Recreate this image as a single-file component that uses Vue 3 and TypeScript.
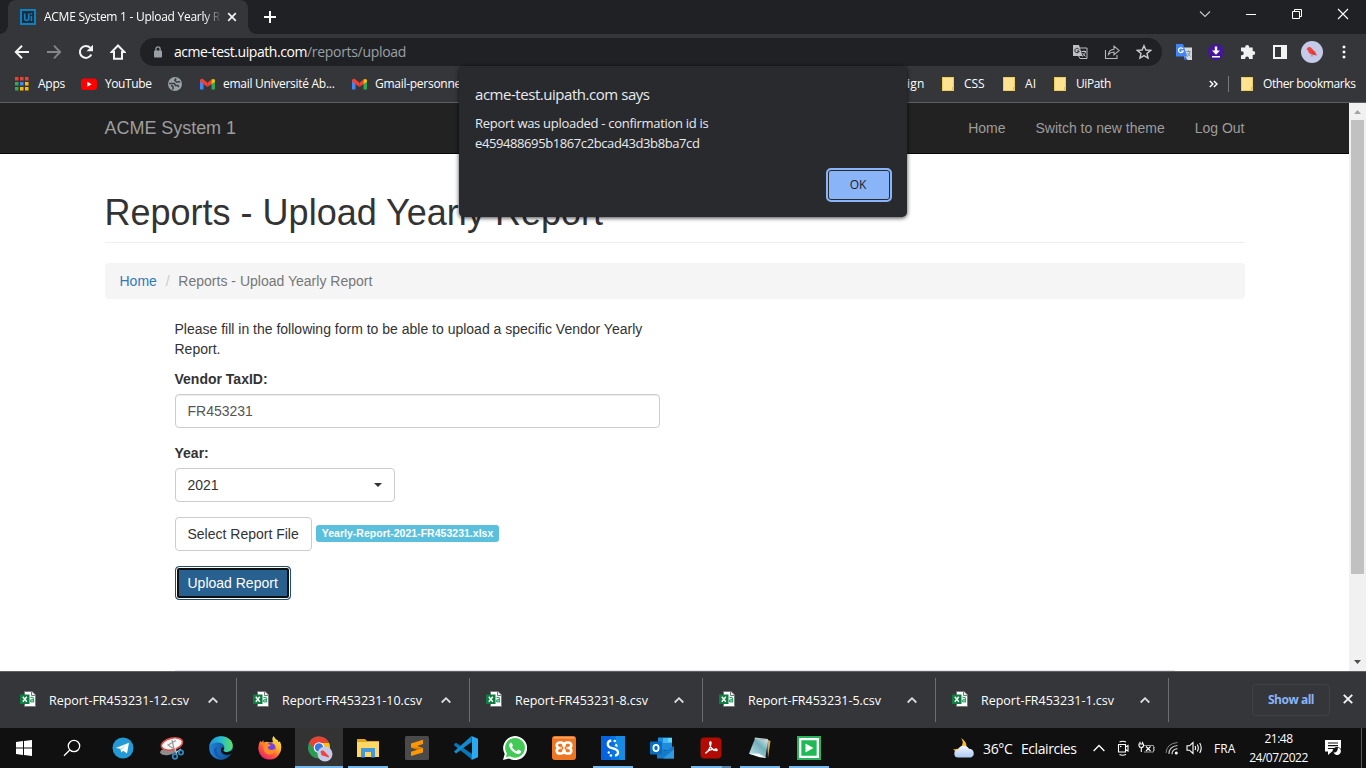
<script setup lang="ts">
import type { Directive } from 'vue'

// Spreads a label's letters so that it takes the given width in pixels.
const vFit: Directive<HTMLElement, number> = {
  mounted(el, { value }) {
    const count = (el.textContent ?? '').trim().length
    const natural = el.getBoundingClientRect().width
    if (count > 0) el.style.letterSpacing = `${((value - natural) / count).toFixed(4)}px`
  },
}

interface Download {
  name: string
  width: number
}

const downloads: Download[] = [
  { name: 'Report-FR453231-12.csv', width: 140 },
  { name: 'Report-FR453231-10.csv', width: 140 },
  { name: 'Report-FR453231-8.csv', width: 133 },
  { name: 'Report-FR453231-5.csv', width: 133 },
  { name: 'Report-FR453231-1.csv', width: 133 },
]
</script>

<template>
  <div class="screen">
    <header class="tabstrip">
      <div class="tab">
        <svg class="favicon" viewBox="0 0 16 16" width="16" height="16">
          <rect x="1" y="1" width="14" height="14" fill="#1c2c38" stroke="#0d80c4" stroke-width="2" />
          <path d="M4.7 4.5V9q0 2.5 2 2.5T8.8 9V4.5M11.4 7v5M11.4 4v1.6" fill="none" stroke="#0d80c4" stroke-width="1.6" />
        </svg>
        <div class="tab-title"><span v-fit="176">ACME System 1 - Upload Yearly R</span></div>
        <svg class="tab-close" viewBox="0 0 10 10" width="10" height="10"><path d="M1.2 1.2l7.6 7.6M8.8 1.2L1.2 8.8" stroke="#f1f3f4" stroke-width="1.7" /></svg>
      </div>
      <svg class="plus" viewBox="0 0 12 12" width="12" height="12"><path d="M6 0v12M0 6h12" stroke="#fff" stroke-width="2" /></svg>
      <div class="window-buttons">
        <svg viewBox="0 0 12 12" width="12" height="12"><path d="M1 3.5l5 5 5-5" fill="none" stroke="#c8c9ca" stroke-width="1.1" /></svg>
        <svg viewBox="0 0 12 12" width="12" height="12"><path d="M1 6.5h10" stroke="#fff" /></svg>
        <svg viewBox="0 0 12 12" width="12" height="12"><path d="M1.5 3.5h7v7h-7zM3.500 3.500v-2h7v7h-2" fill="none" stroke="#fff" /></svg>
        <svg viewBox="0 0 12 12" width="12" height="12"><path d="M1 1l10 10M11 1L1 11" stroke="#fff" stroke-width="1.1" /></svg>
      </div>
    </header>

    <div class="toolbar">
      <div class="nav-icons">
        <svg viewBox="0 0 16 16" width="16" height="16"><path d="M15 8H2M8 1.700L1.800 8 8 14.300" fill="none" stroke="#f1f3f4" stroke-width="2" /></svg>
        <svg viewBox="0 0 16 16" width="16" height="16"><path d="M1 8h13M8 1.700L14.200 8 8 14.300" fill="none" stroke="#85878a" stroke-width="1.800" /></svg>
        <svg viewBox="0 0 16 16" width="16" height="16"><path d="M13.300 10.500A6 6 0 1 1 12.300 3.800" fill="none" stroke="#f1f3f4" stroke-width="2" /><path d="M15 .8v6.500H8.500z" fill="#f1f3f4" /></svg>
        <svg viewBox="0 0 16 16" width="16" height="16"><path d="M8 1.500L1.600 8H4v6.800h8V8h2.400z" fill="none" stroke="#f1f3f4" stroke-width="2" /></svg>
      </div>
      <div class="omnibox">
        <svg class="lock" viewBox="0 0 8 12" width="8" height="12"><rect y="4.500" width="8" height="7" rx="1" fill="#9aa0a6" /><path d="M1.900 5V3a2.100 2.100 0 0 1 4.200 0v2" fill="none" stroke="#9aa0a6" stroke-width="1.300" /></svg>
        <span v-fit="133" class="host">acme-test.uipath.com</span><span v-fit="99" class="path">/reports/upload</span>
        <div class="omni-icons">
          <svg viewBox="0 0 16 16" width="16" height="16">
            <path d="M6 4h9v10.500H8L6 11z" fill="#202124" stroke="#bdc1c6" />
            <path d="M1 1h6l3.500 11H1z" fill="#bdc1c6" />
            <path d="M7 5.500A2.200 2.200 0 1 0 7.200 7H5" fill="none" stroke="#202124" />
            <path d="M9.500 7.500h4.500M12 6.500v1M13.500 8c-.8 2-1.800 3.300-3.500 4.500M10.500 9l3 3.500" stroke="#bdc1c6" fill="none" />
          </svg>
          <svg viewBox="0 0 16 16" width="16" height="16"><path d="M1.500 6v8.500h11.500v-3.500M4.500 10.500c.5-3.500 2.500-5 5.500-5.200V2.200L15.200 6.500 10 10.800V8c-2.600 0-4 .7-5.500 2.500z" fill="none" stroke="#b5b9be" stroke-width="1.100" /></svg>
          <svg viewBox="0 0 16 16" width="16" height="16"><path d="M8 1.700l1.900 4.300 4.700.4-3.600 3 1.100 4.600L8 11.600 3.900 14 5 9.400 1.400 6.400 6.100 6z" fill="none" stroke="#c8cbce" stroke-width="1.400" /></svg>
        </div>
      </div>
      <div class="extensions">
        <svg viewBox="0 0 16 16" width="16" height="16">
          <path d="M6 3.500h10V16H9z" fill="#d6d8da" /><path d="M9 12l2.500 4H8z" fill="#3367d6" />
          <path d="M0 0h7l4.300 12.500H0z" fill="#4285f4" />
          <path d="M7 5A2.400 2.400 0 1 0 7.200 7H5" stroke="#fff" fill="none" stroke-width="1.200" />
          <path d="M10.500 7.500h4M12.500 6.500v1M14 8c-.6 2-1.500 3.300-3 4.500M11.500 9l3 3.500" stroke="#78909c" fill="none" />
        </svg>
        <svg viewBox="0 0 16 16" width="16" height="16"><circle cx="8" cy="8" r="8" fill="#43169a" /><path d="M6.800 2.500h2.400v4H12L8 10.700 4 6.500h2.800zM4 12h8v1.400H4z" fill="#fff" /></svg>
        <svg viewBox="0 0 16 16" width="16" height="16"><path d="M1 3.500h4.200V3a2 2 0 0 1 4 0v.5h3.500V7h.5a2 2 0 0 1 0 4h-.5v4H9v-.6a1.900 1.900 0 0 0-3.800 0v.6H1v-3.800h.8a1.900 1.900 0 0 0 0-3.900H1z" fill="#eef0f2" /></svg>
        <svg viewBox="0 0 16 16" width="16" height="16"><path d="M1 1h14v14H1zM3 3v10h6V3z" fill="#f1f3f4" fill-rule="evenodd" /></svg>
      </div>
      <svg class="avatar" viewBox="0 0 22 22" width="22" height="22"><circle cx="11" cy="11" r="11" fill="#c5cae9" /><path d="M5.500 8.200L7.200 6.200q2.800-.5 4.100 1.800l3 3 1.700 3.700-4-1.300q-4.200 0-5-4z" fill="#f0443e" /><path d="M10 9l5 5-3-.4z" fill="#d0323f" /><path d="M11 13.500v2" stroke="#8d6e63" /></svg>
      <svg class="menu" viewBox="0 0 4 14" width="4" height="14"><path d="M.7.700h2.600v2.600H.7zM.7 5.700h2.600v2.600H.7zM.7 10.700h2.600v2.600H.7z" fill="#fff" /></svg>
    </div>

    <div class="bookmarks">
      <div class="bm-left">
        <svg viewBox="0 0 14 14" width="14" height="14">
          <path d="M0 0h3.500v3.500H0zM5 0h3.500v3.500H5zM10 0h3.500v3.500H10z" fill="#ea4335" />
          <path d="M0 5h3.500v3.500H0zM0 10h3.500v3.500H0z" fill="#34a853" /><path d="M5 5h3.500v3.500H5z" fill="#4285f4" />
          <path d="M10 5h3.500v3.500H10zM5 10h3.500v3.500H5zM10 10h3.500v3.500H10z" fill="#fbbc04" />
        </svg>
        <span><b v-fit="27">Apps</b></span>
        <svg viewBox="0 0 16 14" width="16" height="14"><rect y="1.500" width="16" height="11.500" rx="3" fill="red" /><path d="M6.300 4.800l4.400 2.500-4.400 2.500z" fill="#fff" /></svg>
        <span><b v-fit="46.500">YouTube</b></span>
        <svg viewBox="0 0 14 14" width="14" height="14"><circle cx="7" cy="7" r="7" fill="#9aa0a6" /><path d="M8.200 1.600L6.800 3.300 8.500 5l3.700-.3M1.200 6.500h5.300l1 2h2.300l1 1.500M3 8.300l2 1.200v3" fill="none" stroke="#3a3b3f" stroke-width="1.500" /></svg>
        <svg viewBox="0 0 15 12" width="15" height="12"><path d="M0 2v9.500h3.500V5z" fill="#4285f4" /><path d="M11.500 5v6.500H15V2z" fill="#34a853" /><path d="M0 2.200Q.5.200 2.500.8l5 3.900V9L0 3.500z" fill="#ea4335" /><path d="M7.500 4.700l4-3.100v4.500L7.500 9z" fill="#ea4335" /><path d="M11.500 1.600Q14 0 15 2.200v1.600l-3.500 2.500z" fill="#fbbc04" /></svg>
        <span><b v-fit="111.500">email Université Ab...</b></span>
        <svg viewBox="0 0 15 12" width="15" height="12"><path d="M0 2v9.500h3.500V5z" fill="#4285f4" /><path d="M11.500 5v6.500H15V2z" fill="#34a853" /><path d="M0 2.200Q.5.200 2.500.8l5 3.900V9L0 3.500z" fill="#ea4335" /><path d="M7.500 4.700l4-3.100v4.500L7.500 9z" fill="#ea4335" /><path d="M11.500 1.600Q14 0 15 2.200v1.600l-3.500 2.500z" fill="#fbbc04" /></svg>
        <span><b v-fit="86">Gmail-personne</b></span>
      </div>
      <div class="bm-right">
        <span><b v-fit="17.500">ign</b></span>
        <i class="folder"></i><span><b v-fit="20.500">CSS</b></span>
        <i class="folder"></i><span><b v-fit="11.500">AI</b></span>
        <i class="folder"></i><span><b v-fit="35">UiPath</b></span>
        <svg viewBox="0 0 9 8" width="9" height="8"><path d="M.8.900L3.900 4 .8 7.100M4.900.900L8 4 4.900 7.100" fill="none" stroke="#fff" stroke-width="1.400" /></svg>
        <i class="rule"></i>
        <i class="folder"></i><span><b v-fit="92.500">Other bookmarks</b></span>
      </div>
    </div>

    <main class="viewport">
      <div class="page">
        <nav class="navbar">
          <div class="container nav-row">
            <span v-fit="131.500" class="brand">ACME System 1</span>
            <div class="nav-links"><span>Home</span><span>Switch to new theme</span><span>Log Out</span></div>
          </div>
        </nav>
        <div class="container">
          <h1><span v-fit="498.500">Reports - Upload Yearly Report</span></h1>
          <div class="breadcrumb"><a>Home</a><span class="slash">/</span><span v-fit="194">Reports - Upload Yearly Report</span></div>
          <form class="form" @submit.prevent>
            <p>Please fill in the following form to be able to upload a specific Vendor Yearly<br />Report.</p>
            <div class="label">Vendor TaxID:</div>
            <div class="input">FR453231</div>
            <div class="label">Year:</div>
            <div class="select">2021<i class="caret"></i></div>
            <div class="file-row"><button type="button" class="btn">Select Report File</button><span class="badge"><span v-fit="171.500">Yearly-Report-2021-FR453231.xlsx</span></span></div>
            <button type="button" class="btn primary">Upload Report</button>
          </form>
          <div class="page-rule"></div>
        </div>
      </div>
      <div class="scrollbar">
        <svg viewBox="0 0 17 17" width="17" height="17"><path d="M5 11l3.500-4 3.500 4z" fill="#a3a3a3" /></svg>
        <div class="thumb"></div>
        <svg viewBox="0 0 17 17" width="17" height="17"><path d="M5 6l3.500 4L12 6z" fill="#505050" /></svg>
      </div>
    </main>

    <section class="downloads">
      <div v-for="d in downloads" :key="d.name" class="download">
        <svg viewBox="0 0 16 16" width="16" height="16">
          <path d="M4.500.5h7.500l3.500 3.500v11.500h-11z" fill="#fff" stroke="#777" />
          <path d="M11.500.5v4h4" fill="#eee" stroke="#777" />
          <rect y="3.500" width="9.500" height="9.500" fill="#107c41" />
          <path d="M2.800 5.800l4 5M6.800 5.800l-4 5" stroke="#fff" stroke-width="1.400" />
          <path d="M10.500 6.700q3-1 3 1.300v3.500M13.500 8.800q-3-.3-3 1.200t3 .5" fill="none" stroke="#33a66b" stroke-width="1.300" />
        </svg>
        <span class="file"><b v-fit="d.width">{{ d.name }}</b></span>
        <svg class="up" viewBox="0 0 12 8" width="12" height="8"><path d="M1.700 6.500L6 2.200l4.300 4.300" fill="none" stroke="#dcdee1" stroke-width="1.800" /></svg>
      </div>
      <div class="show-all"><span v-fit="46">Show all</span></div>
      <svg class="dl-close" viewBox="0 0 10 10" width="10" height="10"><path d="M.8.800l8.400 8.400M9.200.800L.8 9.200" stroke="#f1f3f4" stroke-width="1.900" /></svg>
    </section>

    <footer class="taskbar">
      <div class="system">
        <svg viewBox="0 0 16 16" width="16" height="16"><path d="M0 2l7-.9v6.400H0zM8 1l8-1v7.500H8zM0 8.500h7v6.400L0 14zM8 8.500h8V16l-8-1z" fill="#fff" /></svg>
        <svg viewBox="0 0 18 18" width="18" height="18"><circle cx="11" cy="7" r="5.700" fill="none" stroke="#fff" stroke-width="1.300" /><path d="M6.800 11L1 16.800" stroke="#fff" stroke-width="1.300" /></svg>
      </div>
      <div class="apps">
        <div class="app">
          <svg viewBox="0 0 24 24" width="24" height="24"><circle cx="12" cy="12" r="10.500" fill="#2399d5" /><path d="M4.800 12L18 6.800 16 17.500l-3.800-2.800-2 1.900-.8-3.900z" fill="#fff" /><path d="M9.400 12.700l6-4-4.300 5z" fill="#bddff2" /></svg>
        </div>
        <div class="app">
          <svg viewBox="0 0 24 24" width="24" height="24"><ellipse cx="8" cy="15.500" rx="8" ry="3.500" fill="#8d8d8d" transform="rotate(-8 8 15.500)" /><ellipse cx="12" cy="8" rx="10.800" ry="5.800" fill="#f8f8f8" stroke="#dd4f4b" stroke-width="1.600" transform="rotate(-14 12 8)" /><path d="M12 4l2 9M16 4.500L8 9l6 4" stroke="#999" stroke-width="1.200" fill="none" /><path d="M15 12l1.500 6M21 13l-5.500 4" stroke="#b8c6cf" stroke-width="1.300" /><circle cx="15" cy="20.500" r="2.300" fill="none" stroke="#2e8bc5" stroke-width="1.700" /><circle cx="21" cy="16.500" r="2.200" fill="none" stroke="#2e8bc5" stroke-width="1.700" /></svg>
        </div>
        <div class="app">
          <svg viewBox="0 0 24 24" width="24" height="24">
            <defs><linearGradient id="edge-top" x1="0" x2="1"><stop stop-color="#218fdc" /><stop offset=".5" stop-color="#26bccd" /><stop offset="1" stop-color="#5ee060" /></linearGradient><linearGradient id="edge-low" x1="0" x2="1"><stop stop-color="#2482d9" /><stop offset="1" stop-color="#0b4687" /></linearGradient></defs>
            <circle cx="12" cy="12" r="11.800" fill="url(#edge-low)" />
            <path d="M.2 11C1 4 6 .2 12 .2c7 0 12 4.500 11.800 9.500 0 5-4.800 7-8.300 6-2-.8-1.400-1.700-.5-2.800 1-2-.2-5.500-4-6.200C6.500 6 1.500 8 .2 11z" fill="url(#edge-top)" />
            <path d="M15.200 13q-2 2.300 1 3 3.500.800 6.800-1.500l1 .5-1 2.500q-4 2.300-7.500 1-4-1.500-3.500-5 .3-1.700 1.700-2.500 1.700.4 1.500 2z" fill="#111" /><path d="M8 11c-1.500 5 1.500 10.500 7 12-5 1-10-4-10-8.500 0-2 1-3 3-3.500z" fill="#125aaf" />
          </svg>
        </div>
        <div class="app">
          <svg viewBox="0 0 24 24" width="24" height="24"><defs><linearGradient id="fox" x1=".9" y1="0" x2=".2" y2="1"><stop stop-color="#fff44f" /><stop offset=".4" stop-color="#ffb02e" /><stop offset=".65" stop-color="#ff5b38" /><stop offset="1" stop-color="#e91b76" /></linearGradient></defs><path d="M2.200 5l1.500 1.300L5.500 4v2.500l3-.8Q13 7 15 6q-1.500-3.500.5-6 1.500 3 4.500 4.500l.2 1.500 1.800-.5q3 7-.8 12.800A11.300 11.300 0 0 1 .7 15Q-.5 9.500 2.200 5z" fill="url(#fox)" /><circle cx="12.300" cy="12" r="5.300" fill="#7542e5" /><path d="M5.500 8q3.500-1.500 5.500.2l2 1.300-3 1.300q-.5 2.500 2.500 3 3 .5 5-1.500-.5 6-6 6.300-7-.3-6-10.600z" fill="#ff8c27" /></svg>
        </div>
        <div class="app active">
          <svg viewBox="0 0 26 26" width="26" height="26"><circle cx="12" cy="11.500" r="11" fill="#2a9c52" /><path d="M2.200 6.500A11 11 0 0 1 22 7H12L7.500 14z" fill="#e94235" /><path d="M12 7h10a11 11 0 0 1-10 15.500l5-9z" fill="#fbc116" /><circle cx="12" cy="11.500" r="5.300" fill="#fff" /><circle cx="12" cy="11.500" r="4.200" fill="#3479e4" /><circle cx="18" cy="18" r="7.500" fill="#c5cae9" /><path d="M13.500 15.500q2.500-2.200 4 0l4.500 4.800-.4 1.200-3.600-1.200-3.500-1z" fill="#ed443f" /></svg>
        </div>
        <div class="app open">
          <svg viewBox="0 0 24 24" width="24" height="24"><path d="M1 3h8l2 2h12v15H1z" fill="#e0a51a" /><path d="M1 6h22v15H1z" fill="#ffd766" /><path d="M5 12h14v9.500h-4V16H9v5.500H5z" fill="#4298d8" /></svg>
        </div>
        <div class="app">
          <svg viewBox="0 0 24 24" width="24" height="24"><rect width="24" height="24" rx="1.500" fill="#4a4a4a" /><path d="M6 7.500L18 3.800V8l-6 2 6 2v4.500L6 20v-4.200l6.500-2L6 11.500z" fill="#ff9800" /><path d="M6 11.500l12 .5-5.500 1.800z" fill="#d37300" /></svg>
        </div>
        <div class="app">
          <svg viewBox="0 0 24 24" width="24" height="24"><path d="M0 8.200l2-1.500L18 18v5.500L.3 9.500z" fill="#0877b9" /><path d="M0 15.500L17.500 0v6L2 17.500z" fill="#138bd0" /><path d="M17.500 0L24 2.800v18.400L17.500 24q.5-2 .5-12T17.500 0z" fill="#29a9f0" /></svg>
        </div>
        <div class="app">
          <svg viewBox="0 0 24 24" width="24" height="24"><path d="M0 24l1.700-6A12 12 0 1 1 6 22.400z" fill="#fff" /><path d="M2.900 21.200l1-3.700a9.900 9.900 0 1 1 3 2.800z" fill="#42c956" /><path d="M8.500 6.500l1.500 3-1 1.600c1.300 2.200 2.400 3.200 4.800 4.100l1.400-1.600 3.100 1.600c-.2 2-1.800 2.900-3.600 2.700C10.700 17 6.500 13 6.200 9.200c0-1.400 1-2.700 2.300-2.700z" fill="#fff" /></svg>
        </div>
        <div class="app">
          <svg viewBox="0 0 24 24" width="24" height="24"><rect width="24" height="24" rx="3" fill="#ee7623" /><path d="M1 2.500q0-1.500 2-1.500h18q2 0 2 1.500z" fill="#f7a76b" /><path d="M9.500 12H8.500M14.500 12h1M7 12q-2.500-.8-2.300-3 .3-2.500 3-2.500h1.600q1.700 0 2 2l.7 2 .7-2q.3-2 2-2h1.600q2.700 0 3 2.500.2 2.200-2.300 3 2.500.8 2.300 3-.3 2.500-3 2.500h-1.600q-1.700 0-2-2l-.7-2-.7 2q-.3 2-2 2H7.700q-2.700 0-3-2.500-.2-2.200 2.300-3z" fill="none" stroke="#fff" stroke-width="2.500" stroke-linejoin="round" /></svg>
        </div>
        <div class="app open">
          <svg viewBox="0 0 24 24" width="24" height="24"><path d="M0 0h24v24H0z" fill="#0575e6" /><path d="M0 0h10v24H0z" fill="#0563df" /><path d="M15 0h9v24h-5l-4-12z" fill="#168be4" /><path d="M10.300 4.500Q6.800 5.200 6.800 8q0 2.500 2.500 3.700l5.200 1.500q2.500 1 2.500 3.300 0 2.500-3 3.200" fill="none" stroke="#fff" stroke-width="2.300" /><circle cx="13.800" cy="5" r="1.300" fill="#fff" /><path d="M14.500 7.500q2.500.5 2 3.500l-3-1q1.200-1.500 1-2.500z" fill="#fff" /><circle cx="7.800" cy="16.500" r="1.200" fill="#fff" /><circle cx="9.900" cy="19.500" r="1.300" fill="#fff" /></svg>
        </div>
        <div class="app">
          <svg viewBox="0 0 24 24" width="24" height="24"><path d="M8 1.500h14v13H8z" fill="#1f8bdc" /><path d="M13 2h9v5h-9z" fill="#43b8f2" /><path d="M18 2h4v4h-4z" fill="#61d9ff" /><path d="M7 9l8 6 9-5v12.500H7z" fill="#157ac8" /><path d="M13 22.500l11-9v9z" fill="#2f9be2" /><rect y="5.500" width="12" height="13" rx="1" fill="#086ec3" /><ellipse cx="6" cy="12" rx="2.600" ry="3.100" fill="none" stroke="#fff" stroke-width="1.800" /></svg>
        </div>
        <div class="app open grouped">
          <svg viewBox="0 0 24 24" width="24" height="24"><rect x="1.500" y="1.500" width="21" height="21" rx="4" fill="#b10b03" /><path d="M6.500 17.300c2.500-1.300 5.500-6.500 5.500-10.500 0-1.500-1.500-1-1.300.5.600 4 3.200 7 6.500 7.300 1.500-.1 1-1.800-1-1.500-4 0-7.200 1.200-9.700 4.200z" fill="none" stroke="#fff" stroke-width="1.400" /></svg>
        </div>
        <div class="app open">
          <svg viewBox="0 0 24 24" width="24" height="24"><defs><linearGradient id="note" x1="0" y1="1" x2="1" y2="0"><stop stop-color="#cfe9ed" /><stop offset=".6" stop-color="#71aebb" /><stop offset="1" stop-color="#dcecef" /></linearGradient></defs><path d="M19 3.500l3.500 1.500-2.500 17z" fill="#c8aa6e" /><path d="M7 2.500L20 4l-2.500 17.500L1 17.800z" fill="url(#note)" /><path d="M7 1.500l13 1.500v1.300L6.500 3z" fill="#b9c5c8" /><path d="M1 17.800l9.500-.3 8.200 4.500-7-.8z" fill="#f7ffff" /></svg>
        </div>
        <div class="app open">
          <svg viewBox="0 0 24 24" width="24" height="24"><path d="M0 0h24v24H0z" fill="#29b45b" /><path d="M3.200 3.200h17.600v17.600H3.200z" fill="#1db954" stroke="#fff" stroke-width="2.300" /><path d="M8.500 7.500l8 4.500-8 4.500z" fill="#fff" /></svg>
        </div>
      </div>
      <div class="tray">
        <svg viewBox="0 0 24 22" width="24" height="22"><defs><linearGradient id="cloud" x1="0" y1="0" x2="0" y2="1"><stop stop-color="#f4f7ff" /><stop offset="1" stop-color="#a9caf2" /></linearGradient></defs><path d="M9 1q4 6-1 9.500Q5 13 1 12q2 3 5 3l8-3Q16 5 9 1z" fill="#ffb92c" /><path d="M6.500 20.500a4 4 0 0 1-.3-8 6 6 0 0 1 10.800-.8 4.600 4.600 0 0 1 2 8.800z" fill="url(#cloud)" /></svg>
        <span class="big"><b v-fit="29.500">36°C</b></span>
        <span class="big"><b v-fit="55.500">Eclaircies</b></span>
        <svg viewBox="0 0 12 12" width="12" height="12"><path d="M.6 9L6 3.500 11.400 9" fill="none" stroke="#fff" stroke-width="1.300" /></svg>
        <svg viewBox="0 0 13 16" width="13" height="16"><path d="M1.500 4.500h7v7.500h-7zM8.500 7l2.500-1.500v5.500l-2.500-1.500M2.500 2q3-1.500 6.500 0M2.500 14.500q3 1.500 6.500 0" fill="none" stroke="#fff" stroke-width="1.100" /><circle cx="3.700" cy="6.500" r=".8" fill="#fff" /></svg>
        <svg viewBox="0 0 17 14" width="17" height="14"><path d="M6 4.500h9.500v6.500H6M15.500 6.500H17v2.500h-1.500" fill="none" stroke="#999" /><path d="M1 3h4.500v1.500q0 2-2.200 2T1 4.500zM2 3V.8M4.500 3V.8M3.300 6.500v4.500M8 5.500l4.500 4.500M12.500 5.500L8 10" fill="none" stroke="#fff" stroke-width="1.100" /></svg>
        <svg viewBox="0 0 14 14" width="14" height="14"><path d="M1 12Q1.500 2.500 12.500 1.500" fill="none" stroke="#888" /><path d="M4 13Q4 5.500 12.500 4.500M7 13.300q0-5 5.500-5.600" fill="none" stroke="#ccc" stroke-width="1.200" /><circle cx="11.300" cy="12" r="1.500" fill="#fff" /></svg>
        <svg viewBox="0 0 17 14" width="17" height="14"><path d="M1 4.800h2.500L7 1.500v11L3.500 9.200H1z" fill="none" stroke="#fff" stroke-width="1.100" /><path d="M9 5q1.200 2 0 4M11.300 3.500q2 3.500 0 7M13.700 2q3 5 0 10" fill="none" stroke="#fff" stroke-width="1.100" /></svg>
        <span><b v-fit="21.500">FRA</b></span>
        <div class="clock"><b v-fit="28">21:48</b><b v-fit="58.500">24/07/2022</b></div>
        <svg viewBox="0 0 17 18" width="17" height="18"><path d="M0 1h16v11.500H7L3 16v-3.500H0z" fill="#fff" /><path d="M3 4h10M3 6.700h10M3 9.500h6" stroke="#111" stroke-width="1.200" /><circle cx="12" cy="12.500" r="4.500" fill="#111" /><path d="M13 8.500a3.800 3.800 0 1 1-4.500 5q4 .8 4.500-5z" fill="#fff" /></svg>
        <i class="desktop-edge"></i>
      </div>
    </footer>

    <div class="dialog">
      <div class="dialog-title"><span v-fit="174.500">acme-test.uipath.com says</span></div>
      <div class="dialog-line"><span v-fit="233.500">Report was uploaded - confirmation id is</span></div>
      <div class="dialog-line"><span v-fit="224.500">e459488695b1867c2bcad43d3b8ba7cd</span></div>
      <button type="button" class="ok"><span v-fit="16.500">OK</span></button>
    </div>
  </div>
</template>

<style>
body {
  margin: 0;
  overflow: hidden;
}
</style>

<style scoped>
.screen {
  position: relative;
  display: flex;
  flex-direction: column;
  width: 1366px;
  height: 768px;
  overflow: hidden;
  background: #fff;
  font-family: "Open Sans", "Noto Sans", sans-serif;
  font-size: 12px;
  color: #fff;
}
.screen * {
  box-sizing: border-box;
}
svg {
  display: block;
  flex: none;
}
b {
  font-weight: inherit;
}
span,
b {
  display: inline-block;
  white-space: nowrap;
}

.tabstrip {
  display: flex;
  height: 34px;
  background: #202124;
}
.tab {
  position: relative;
  display: flex;
  align-items: center;
  width: 240px;
  margin-left: 8px;
  padding: 0 11px 0 12px;
  border-radius: 8px 8px 0 0;
  background: #35363a;
}
.tab::before,
.tab::after {
  content: "";
  position: absolute;
  bottom: 0;
  width: 8px;
  height: 8px;
}
.tab::before {
  left: -8px;
  background: radial-gradient(circle at 0 0, transparent 7.500px, #35363a 8px);
}
.tab::after {
  right: -8px;
  background: radial-gradient(circle at 100% 0, transparent 7.500px, #35363a 8px);
}
.tab-title {
  width: 177px;
  margin-left: 8px;
  line-height: 20px;
  -webkit-mask-image: linear-gradient(90deg, #000 160px, transparent 178px);
  mask-image: linear-gradient(90deg, #000 160px, transparent 178px);
}
.tab-close {
  margin-left: auto;
}
.plus {
  margin: 11px 0 0 16px;
}
.window-buttons {
  display: flex;
  gap: 34px;
  margin: 8px 17px 0 auto;
}

.toolbar {
  display: flex;
  align-items: center;
  height: 36px;
  background: #35363a;
}
.nav-icons {
  display: flex;
  gap: 16px;
  margin-left: 14px;
}
.omnibox {
  display: flex;
  align-items: center;
  width: 1022px;
  height: 28px;
  margin-left: 14px;
  padding: 0 10px 0 14px;
  border-radius: 14px;
  background: #202124;
  font-size: 14px;
}
.host,
.path {
  padding-bottom: 2px;
}
.lock {
  margin-right: 12px;
}
.path {
  color: #9aa0a6;
}
.omni-icons {
  display: flex;
  gap: 16px;
  margin-left: auto;
}
.extensions {
  display: flex;
  gap: 16px;
  margin-left: 14px;
}
.avatar {
  margin-left: 13px;
}
.menu {
  margin-left: 19px;
}

.bookmarks {
  display: flex;
  align-items: center;
  justify-content: space-between;
  height: 33px;
  padding-bottom: 4px;
  border-bottom: 1px solid #5f6063;
  background: #35363a;
}
.bookmarks span {
  padding-bottom: 2px;
}
.bm-left {
  display: grid;
  grid-template-columns: 23px 43px 24px 63px 32px 23px 129px 23px 86px;
  align-items: center;
  margin-left: 15px;
}
.bm-right {
  display: grid;
  grid-template-columns: 35px 22px 39px 22px 29px 22px 133px 19px 13px 22px 103px;
  align-items: center;
}
.folder {
  width: 12px;
  height: 14px;
  background: linear-gradient(#e9bd43, #e9bd43) 9px 9px / 3px 5px no-repeat, #ffe391;
  border: 1px solid #f0cc5b;
}
.rule {
  width: 1px;
  height: 16px;
  background: #77787b;
}

.viewport {
  display: flex;
  height: 568px;
}
.page {
  width: 1349px;
  font: 14px/20px "Liberation Sans", Arial, sans-serif;
  color: #333;
}
.container {
  width: 1170px;
  margin: 0 auto;
  padding: 0 15px;
}
.navbar {
  height: 51px;
  border-bottom: 1px solid #080808;
  background: #222;
  color: #9d9d9d;
}
.nav-row {
  display: flex;
  align-items: center;
  justify-content: space-between;
  height: 50px;
}
.brand {
  font-size: 18px;
}
.nav-links {
  display: flex;
  gap: 30px;
}
h1 {
  height: 89px;
  margin: 0 0 20px;
  padding-top: 39px;
  border-bottom: 1px solid #eee;
  font-size: 36px;
  font-weight: 400;
  line-height: 40px;
}
.breadcrumb {
  display: flex;
  height: 36px;
  padding: 8px 15px;
  border-radius: 4px;
  background: #f5f5f5;
  color: #777;
}
.breadcrumb a {
  color: #337ab7;
}
.slash {
  width: 21.500px;
  padding-left: 9px;
  color: #ccc;
}
.form {
  width: 485px;
  height: 371px;
  margin-left: 70px;
  padding-top: 20px;
}
p {
  margin: 0 0 10px;
  white-space: nowrap;
}
.label {
  margin-bottom: 5px;
  font-weight: 700;
}
.input,
.select {
  height: 34px;
  margin-bottom: 15px;
  padding: 6px 12px;
  border: 1px solid #ccc;
  border-radius: 4px;
}
.input {
  color: #555;
  box-shadow: inset 0 1px 1px rgba(0, 0, 0, 0.075);
}
.select {
  display: flex;
  align-items: center;
  justify-content: space-between;
  width: 220px;
}
.caret {
  border-top: 4px solid #333;
  border-right: 4px solid transparent;
  border-left: 4px solid transparent;
}
.file-row {
  display: flex;
  align-items: center;
  gap: 4px;
  margin-bottom: 15px;
}
.btn {
  height: 34px;
  padding: 6px 12px;
  border: 1px solid #ccc;
  border-radius: 4px;
  background: #fff;
  color: #333;
  font: inherit;
  white-space: nowrap;
}
.badge {
  height: 17px;
  margin-bottom: 1px;
  padding: 0 6px;
  border-radius: 3px;
  background: #5bc0de;
  color: #fff;
  font-size: 10.500px;
  font-weight: 700;
  line-height: 16px;
}
.primary {
  display: block;
  border-color: #204d74;
  background: #286090;
  box-shadow: inset 0 0 0 1px #fff, inset 0 0 0 3px #101010;
  color: #fff;
}
.page-rule {
  width: 1000px;
  margin-left: 70px;
  border-top: 1px solid #e5e5e5;
}
.scrollbar {
  width: 17px;
  background: #f1f1f1;
}
.thumb {
  width: 13px;
  height: 454px;
  margin: 0 2px 80px;
  background: #c1c1c1;
}

.downloads {
  display: flex;
  align-items: center;
  height: 57px;
  border-top: 1px solid #5f6063;
  background: #35363a;
}
.download {
  display: grid;
  grid-template-columns: 29px 158px 12px;
  align-items: center;
  width: 233px;
  height: 44px;
  padding: 0 0 2px 20px;
  border-right: 1px solid #6c6d70;
}
.download:first-child {
  width: 237px;
}
.download + .download {
  padding-left: 16px;
}
.file {
  padding-top: 2px;
  font-size: 12.500px;
}
.up {
  margin-top: 1px;
}
.show-all {
  display: flex;
  align-items: center;
  justify-content: center;
  width: 78px;
  height: 32px;
  margin-left: 83px;
  padding-bottom: 2px;
  border: 1px solid #404145;
  border-radius: 4px;
  color: #8ab4f8;
  font-weight: 700;
}
.dl-close {
  margin: 0 0 2px 13px;
}

.taskbar {
  display: flex;
  height: 40px;
  background: #101010;
}
.system {
  display: flex;
  align-items: center;
  gap: 31px;
  width: 99px;
  padding-left: 16px;
}
.apps {
  display: flex;
  gap: 1px;
}
.app {
  position: relative;
  display: flex;
  align-items: center;
  justify-content: center;
  width: 48px;
  height: 40px;
}
.app.active {
  background: #333;
  box-shadow: inset 0 -2px #76b9ed;
}
.app.active svg {
  margin: 2px 0 0 2px;
}
.app.open::after {
  content: "";
  position: absolute;
  bottom: 0;
  left: 4px;
  width: 40px;
  height: 2px;
  background: #76b9ed;
}
.app.grouped::after {
  background: linear-gradient(90deg, #76b9ed 31px, #5985a8 31px);
}
.tray {
  display: grid;
  grid-template-columns: 31px 38px 72px 24px 21px 27px 21px 28px 29px 82px 36px 1px;
  align-items: center;
  margin-left: 119px;
}
.big {
  font-size: 14px;
}
.clock {
  display: flex;
  flex-direction: column;
  align-items: center;
  gap: 1px;
  width: 71px;
  line-height: 18px;
}
.tray .desktop-edge {
  width: 1px;
  height: 40px;
  background: #5a5a5a;
}

.dialog {
  position: absolute;
  top: 66px;
  left: 459px;
  display: flex;
  flex-direction: column;
  width: 448px;
  height: 151px;
  padding: 18px 15px 0 16px;
  border-radius: 5px;
  background: #292a2d;
  box-shadow: 0 1px 4px rgba(0, 0, 0, 0.75);
  color: #e8eaed;
}
.dialog-title {
  margin-bottom: 9px;
  font-size: 15px;
  line-height: 20px;
}
.dialog-line {
  font-size: 13px;
  line-height: 20px;
}
.ok {
  align-self: flex-end;
  width: 66px;
  height: 34px;
  margin-top: 15px;
  padding: 0 2px 2px 0;
  border: 2px solid #8ab4f8;
  border-radius: 5px;
  background: #8ab4f8;
  box-shadow: inset 0 0 0 1px #292a2d;
  color: #202124;
  font: 12px "Open Sans", sans-serif;
}
</style>
